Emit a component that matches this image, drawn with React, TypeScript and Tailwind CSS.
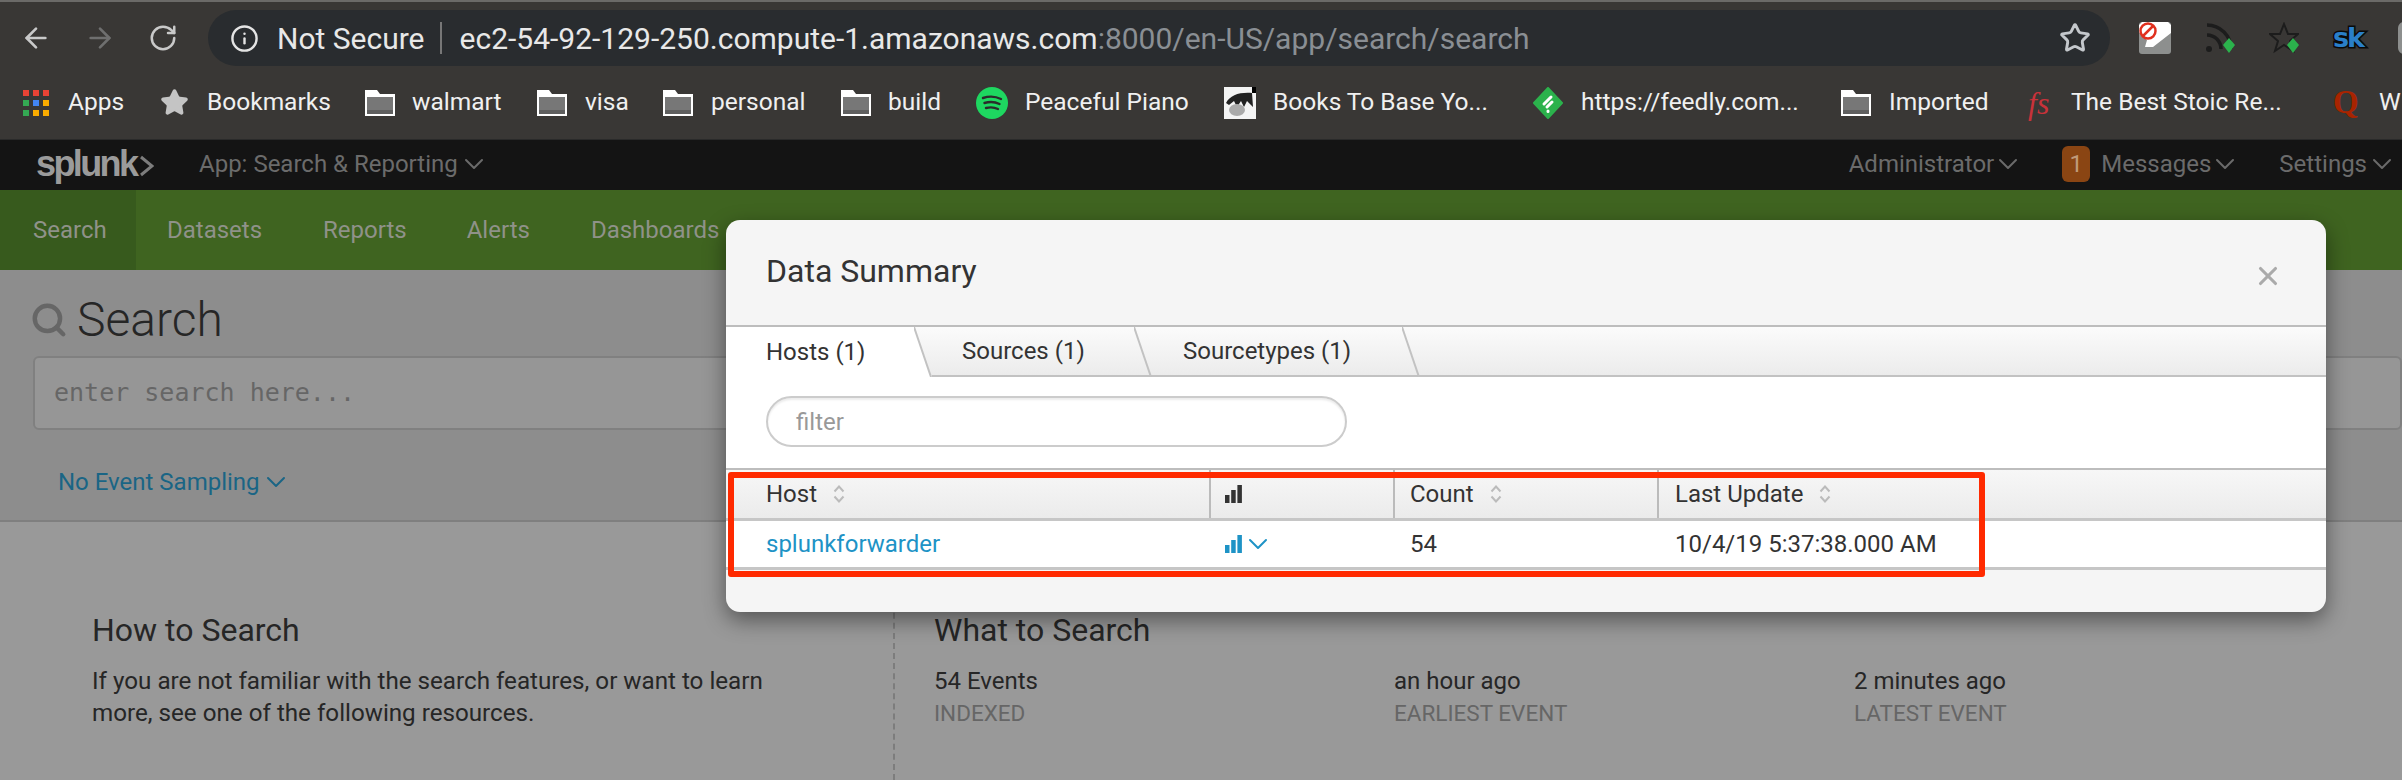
import { ArrowLeft, ArrowRight, ChevronDown, Info, RotateCw, Search, Star, X } from 'lucide-react';

const Folder = () => (
  <svg width="32" height="28" viewBox="0 0 32 28" className="shrink-0">
    <path d="M1 1h12l3 4h15v22H1z" fill="#fff" />
    <rect x="3" y="8" width="26" height="17" fill="#777" />
    <rect x="3" y="21" width="26" height="4" fill="#5f5f5f" />
  </svg>
);

const AppsGrid = () => {
  const colours = ['#ea4335', '#ea4335', '#ea4335', '#34a853', '#4285f4', '#f9ab00', '#34a853', '#f9ab00', '#f9ab00'];
  return (
    <div className="grid grid-cols-3 gap-[4px] w-[26px] shrink-0">
      {colours.map((c, i) => (
        <svg key={i} width="6" height="6" className="block">
          <rect width="6" height="6" fill={c} />
        </svg>
      ))}
    </div>
  );
};

const Spotify = () => (
  <svg width="32" height="32" viewBox="0 0 32 32" className="shrink-0">
    <circle cx="16" cy="16" r="16" fill="#1ed760" />
    <path d="M7 11c6-2 12-2 18 1M8.500 16c5-1.500 10-1.500 15 1M10 21c4-1 8-1 12 1" fill="none" stroke="#2b2b2b" strokeWidth="2.400" strokeLinecap="round" />
  </svg>
);

const BookThumb = () => (
  <svg width="32" height="32" viewBox="0 0 32 32" className="shrink-0">
    <rect width="32" height="32" fill="#f4f4f4" />
    <path d="M2 16C6 8 16 5 28 6l1 14-6-6-3 6-3-6-4 6-3-6-5 4z" fill="#222" />
    <ellipse cx="13" cy="23" rx="8" ry="6" fill="#aaa" />
    <rect x="28" width="4" height="6" fill="#000" />
  </svg>
);

const Feedly = ({ size = 32 }: { size?: number }) => (
  <svg width={size} height={size} viewBox="0 0 32 32" className="shrink-0">
    <path d="M16 1l14 15-14 15L2 16z" fill="#2bb24c" stroke="#2bb24c" strokeWidth="2" strokeLinejoin="round" />
    <path d="M19 10l-7 7M20 15l-5 5M16 24v.500" stroke="#fff" strokeWidth="3" strokeLinecap="round" />
  </svg>
);

const bookmarks = [
  { icon: <AppsGrid />, label: 'Apps', width: 'w-[137px]', gap: 'gap-[19px]' },
  { icon: <Star size={29} fill="#c4c4c4" stroke="#c4c4c4" className="shrink-0" />, label: 'Bookmarks', width: 'w-[204px]', gap: 'gap-[18px]' },
  { icon: <Folder />, label: 'walmart', width: 'w-[172px]', gap: 'gap-[16px]' },
  { icon: <Folder />, label: 'visa', width: 'w-[126px]', gap: 'gap-[17px]' },
  { icon: <Folder />, label: 'personal', width: 'w-[178px]', gap: 'gap-[17px]' },
  { icon: <Folder />, label: 'build', width: 'w-[136px]', gap: 'gap-[16px]' },
  { icon: <Spotify />, label: 'Peaceful Piano', width: 'w-[248px]', gap: 'gap-[17px]' },
  { icon: <BookThumb />, label: 'Books To Base Yo...', width: 'w-[308px]', gap: 'gap-[17px]' },
  { icon: <Feedly />, label: 'https://feedly.com...', width: 'w-[308px]', gap: 'gap-[17px]' },
  { icon: <Folder />, label: 'Imported', width: 'w-[188px]', gap: 'gap-[17px]' },
  {
    icon: <span className="w-[24px] shrink-0 font-['Liberation_Serif',serif] italic text-[32px] text-[#c8323a]">fs</span>,
    label: 'The Best Stoic Re...',
    width: 'w-[305px]',
    gap: 'gap-[19px]',
  },
  {
    icon: <span className="w-[25px] shrink-0 font-['Liberation_Serif',serif] font-bold text-[33px] text-[#a82400]">Q</span>,
    label: 'W',
    width: 'w-[69px]',
    gap: 'gap-[21px]',
  },
];

const SortIcon = () => (
  <svg width="12" height="18" viewBox="0 0 12 18" className="shrink-0">
    <path d="M1.500 6.500L6 1.500l4.500 5M1.500 11.500L6 16.500l4.500-5" fill="none" stroke="#bbb" strokeWidth="2" />
  </svg>
);

const Bars = ({ colour }: { colour: string }) => (
  <svg width="17" height="18" viewBox="0 0 17 18" className="shrink-0">
    <rect y="10" width="4.500" height="8" fill={colour} />
    <rect x="6.200" y="5" width="4.500" height="13" fill={colour} />
    <rect x="12.400" width="4.500" height="18" fill={colour} />
  </svg>
);

const Caret = () => <ChevronDown size={32} strokeWidth={1.500} className="shrink-0" />;

const Slant = () => (
  <svg width="18" height="50" viewBox="0 0 18 50" className="absolute right-0 top-0">
    <path d="M0 0L17 50" stroke="#c2c2c2" strokeWidth="2" fill="none" />
  </svg>
);

const Modal = () => (
  <div className="absolute left-[726px] top-[220px] w-[1600px] h-[392px] bg-[#f5f5f5] rounded-[14px] shadow-[0_8px_22px_rgba(0,0,0,0.45)] overflow-hidden text-[#333]">
    <div className="h-[105px] relative pl-[40px] pt-[31px]">
      <h2 className="text-[32px] leading-[40px] font-normal">Data Summary</h2>
      <X size={30} strokeWidth={2.500} className="absolute right-[43px] top-[41px] text-[#aaa]" />
    </div>

    {/* Tabs */}
    <div className="border-t-2 border-[#bdbdbd] flex h-[52px] bg-gradient-to-b from-[#fbfbfb] to-[#ebebeb] text-[24px]">
      <div className="flex h-[50px]">
        <div className="w-[188px] bg-white pl-[40px] flex items-center">Hosts (1)</div>
        <svg width="18" height="50" viewBox="0 0 18 50" className="block">
          <path d="M0 0L17 50H0z" fill="#fff" />
          <path d="M0 0L17 50" stroke="#c2c2c2" strokeWidth="2" fill="none" />
        </svg>
      </div>
      <div className="relative w-[220px] h-[50px] pl-[30px] flex items-center border-b-2 border-[#c2c2c2]">
        Sources (1)
        <Slant />
      </div>
      <div className="relative w-[268px] h-[50px] pl-[31px] flex items-center border-b-2 border-[#c2c2c2]">
        Sourcetypes (1)
        <Slant />
      </div>
      <div className="flex-1 h-[50px] border-b-2 border-[#c2c2c2]" />
    </div>

    {/* Filter */}
    <div className="bg-white h-[91px] pl-[40px] pt-[19px]">
      <div className="w-[581px] h-[51px] rounded-full border-2 border-[#ccc] shadow-[inset_0_2px_2px_rgba(0,0,0,0.08)] pl-[28px] flex items-center text-[24px] text-[#999]">
        filter
      </div>
    </div>

    {/* Table */}
    <div className="border-t-2 border-[#bdbdbd]">
      <div className="flex h-[48px] bg-gradient-to-b from-[#f7f7f7] to-[#ebebeb] text-[24px]">
        <div className="w-[485px] pl-[40px] flex items-center gap-[16px] border-r-2 border-[#bbb]">
          Host <SortIcon />
        </div>
        <div className="w-[184px] pl-[14px] flex items-center border-r-2 border-[#bbb]">
          <Bars colour="#333" />
        </div>
        <div className="w-[264px] pl-[15px] flex items-center gap-[16px] border-r-2 border-[#bbb]">
          Count <SortIcon />
        </div>
        <div className="flex-1 pl-[16px] flex items-center gap-[16px]">
          Last Update <SortIcon />
        </div>
      </div>
      <div className="flex h-[52px] bg-white border-y-[3.500px] border-[#c6c6c6] text-[24px] items-center">
        <div className="w-[485px] pl-[40px] text-[#1e93c6]">splunkforwarder</div>
        <div className="w-[184px] pl-[14px] flex items-center text-[#1e93c6]">
          <Bars colour="#1e93c6" />
          <Caret />
        </div>
        <div className="w-[264px] pl-[15px]">54</div>
        <div className="flex-1 pl-[16px]">10/4/19 5:37:38.000 AM</div>
      </div>
    </div>

    {/* Highlight the annotation draws round the table */}
    <div className="absolute left-[2px] top-[252px] w-[1257px] h-[105px] border-[6px] border-[#ff2a00] rounded-[3px]" />
  </div>
);

export default function App() {
  return (
    <div className="relative w-[2402px] h-[780px] overflow-hidden bg-[#999] font-['Roboto',sans-serif]">
      {/* Browser chrome */}
      <div className="h-[139px] bg-[#393735] border-t-2 border-[#6b6a68]">
        <div className="flex items-center h-[64px] pt-[8px]">
          <div className="flex items-center w-[208px] shrink-0 pl-[20px] gap-[32px]">
            <ArrowLeft size={32} className="text-[#c9c9c9]" />
            <ArrowRight size={32} className="text-[#6f6f6f]" />
            <RotateCw size={30} className="text-[#c9c9c9]" />
          </div>
          <div className="flex items-center w-[1902px] shrink-0 h-[56px] rounded-full bg-[#292c2f] pl-[22px]">
            <Info size={29} className="text-[#e4e4e4]" />
            <span className="ml-[18px] text-[30px] text-[#e8e8e8]">Not Secure</span>
            <span className="ml-[15px] w-[2px] h-[32px] bg-[#777]" />
            <span className="ml-[18px] text-[30px] text-[#e8e8e8]">
              ec2-54-92-129-250.compute-1.amazonaws.com<span className="text-[#8a8f94]">:8000/en-US/app/search/search</span>
            </span>
            <Star size={32} strokeWidth={2.200} className="ml-auto mr-[19px] text-[#c4c8cc]" />
          </div>
          <div className="flex items-center pl-[29px] gap-[34px] shrink-0">
            <svg width="32" height="32" viewBox="0 0 32 32" className="shrink-0">
              <rect width="32" height="32" rx="3" fill="#8d8f8e" />
              <path d="M3 0h26l3 3v8L14 25H6l2-7L0 10V3z" fill="#fff" />
              <circle cx="9" cy="9" r="7.500" fill="#fff" stroke="#e0301e" strokeWidth="2.500" />
              <path d="M4 14L14 4" stroke="#e0301e" strokeWidth="2.500" />
            </svg>
            <svg width="30" height="32" viewBox="0 0 30 32" className="shrink-0 relative">
              <circle cx="4" cy="27" r="3" fill="#1c1c1c" />
              <path d="M2 13a14 14 0 0 1 14 14M2 3a24 24 0 0 1 24 24" fill="none" stroke="#1c1c1c" strokeWidth="3.500" />
              <path d="M24 16l6 7-6 8-6-8z" fill="#2bb24c" />
            </svg>
            <svg width="30" height="32" viewBox="0 0 30 32" className="shrink-0">
              <path d="M15 2l4 10h10l-8 7 3 10-9-6-9 6 3-10-8-7h10z" fill="none" stroke="#1c1c1c" strokeWidth="2" />
              <path d="M24 16l6 7-6 8-6-8z" fill="#2bb24c" />
            </svg>
            <span className="w-[31px] font-['DejaVu_Sans',sans-serif] font-bold text-[27px] leading-[32px] tracking-[-2px] text-[#2a7fc9] [-webkit-text-stroke:3px_#0a0a0a] [paint-order:stroke_fill]">sk</span>
            <span className="w-[32px] h-[32px] rounded-[6px] bg-[#8d8f8e]" />
          </div>
        </div>
        {/* Bookmarks bar */}
        <div className="flex items-center h-[73px] pl-[23px] overflow-hidden text-[24.500px] text-[#f0f0f0]">
          {bookmarks.map((b) => (
            <div key={b.label} className={`flex items-center shrink-0 whitespace-nowrap overflow-hidden ${b.width} ${b.gap}`}>
              {b.icon}
              <span>{b.label}</span>
            </div>
          ))}
        </div>
      </div>

      {/* Splunk bar */}
      <div className="flex items-center h-[51px] pb-[2px] bg-[#141414] border-t border-[#2a2a2a] text-[24px] text-[#6b6b6b]">
        <div className="pl-[36px] w-[199px] flex items-center text-[#9b9b9b] font-['Liberation_Sans',sans-serif] font-bold text-[36px] tracking-[-2.600px] leading-none">
          splunk
          <svg width="14" height="22" viewBox="0 0 14 22" className="ml-[4px] mt-[4px]">
            <path d="M1 2l11 9-11 9" fill="none" stroke="#7d7d7d" strokeWidth="3" />
          </svg>
        </div>
        <span>App: Search &amp; Reporting</span>
        <Caret />
        <div className="ml-auto flex items-center pr-[4px]">
          <span>Administrator</span>
          <span className="-ml-[2px] flex"><Caret /></span>
          <span className="ml-[38px] w-[28px] h-[36px] rounded-[6px] bg-[#8a4513] text-[#c09a7a] flex items-center justify-center">1</span>
          <span className="ml-[11px]">Messages</span>
          <span className="-ml-[2px] flex"><Caret /></span>
          <span className="ml-[38px]">Settings</span>
          <span className="-ml-[1px] flex"><Caret /></span>
        </div>
      </div>

      {/* App nav */}
      <div className="flex h-[80px] bg-[#3f6420] text-[24px] text-[#8f9289]">
        <div className="w-[136px] pl-[33px] bg-[#375a1d] flex items-center">Search</div>
        <div className="pl-[31px] flex items-center">Datasets</div>
        <div className="pl-[61px] flex items-center">Reports</div>
        <div className="pl-[60px] flex items-center">Alerts</div>
        <div className="pl-[61px] flex items-center">Dashboards</div>
      </div>

      {/* Search header */}
      <div className="h-[252px] bg-[#8d8d8d] border-b-2 border-[#7f7f7f] pl-[33px] pt-[20px]">
        <div className="flex items-center h-[60px] gap-[9px]">
          <Search size={38} strokeWidth={2.800} className="text-[#666] -ml-[3px]" />
          <h1 className="text-[48px] font-light text-[#262626] leading-none">Search</h1>
        </div>
        <div className="mt-[6px] h-[74px] border-2 border-[#808080] rounded-[6px] bg-[#969696] flex items-center pl-[19px] font-['DejaVu_Sans_Mono',monospace] text-[25px] text-[#666]">
          enter search here...
        </div>
        <div className="mt-[34px] pl-[25px] flex items-center text-[#1a6585] text-[24px]">
          No Event Sampling
          <Caret />
        </div>
      </div>

      {/* Lower panels */}
      <div className="flex h-[258px] text-[#262626]">
        <div className="w-[893px] pl-[92px] pt-[88px]">
          <h3 className="text-[32px] leading-[40px] font-normal">How to Search</h3>
          <p className="mt-[15px] w-[700px] text-[24.200px] leading-[32px]">
            If you are not familiar with the search features, or want to learn more, see one of the following resources.
          </p>
        </div>
        <div className="flex-1 border-l-2 border-dashed border-[#7d7d7d] pl-[39px] pt-[88px]">
          <h3 className="text-[32px] leading-[40px] font-normal">What to Search</h3>
          <div className="mt-[15px] flex text-[24px] leading-[32px]">
            <div className="w-[460px]">
              54 Events
              <div className="text-[#666] text-[22.500px]">INDEXED</div>
            </div>
            <div className="w-[460px]">
              an hour ago
              <div className="text-[#666] text-[22.500px]">EARLIEST EVENT</div>
            </div>
            <div>
              2 minutes ago
              <div className="text-[#666] text-[22.500px]">LATEST EVENT</div>
            </div>
          </div>
        </div>
      </div>

      <Modal />
    </div>
  );
}
